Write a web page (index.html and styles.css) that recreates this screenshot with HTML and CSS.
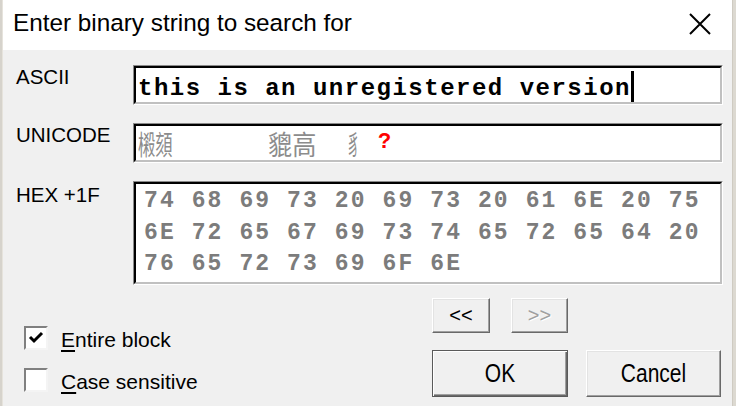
FILE: index.html
```html
<!DOCTYPE html>
<html>
<head>
<meta charset="utf-8">
<link rel="stylesheet" href="styles.css">
</head>
<body>
<div class="win">
  <div class="edge-l"></div>
  <div class="main">
    <div class="titlebar">
      <span class="title">Enter binary string to search for</span>
      <svg class="close" width="22" height="22" viewBox="0 0 22 22"><path d="M1 1 L21 21 M21 1 L1 21" stroke="#000" stroke-width="2" fill="none"/></svg>
    </div>
    <div class="body">
      <div class="fields">
        <div class="lbl">ASCII</div>
        <div class="box"><div class="inner ascii">this is an unregistered version<span class="caret"></span></div></div>
        <div class="lbl">UNICODE</div>
        <div class="box"><div class="inner uni"><span class="ug g1"><span class="gs s1">樧頦</span></span><span class="ug g2"><span class="gs s2">貔高</span></span><span class="ug g3"><span class="gs s3">豸</span></span><span class="q">?</span></div></div>
        <div class="lbl hexl">HEX +1F</div>
        <div class="box hexbox"><div class="inner hex">74 68 69 73 20 69 73 20 61 6E 20 75
6E 72 65 67 69 73 74 65 72 65 64 20
76 65 72 73 69 6F 6E</div></div>
      </div>
      <div class="bottom">
        <div class="opts">
          <div class="chk"><span class="cb"><svg width="16" height="16" viewBox="0 0 16 16"><path d="M2 7 L6 11 L14 3" stroke="#000" stroke-width="3" fill="none"/></svg></span><span class="ct"><u>E</u>ntire block</span></div>
          <div class="chk"><span class="cb"></span><span class="ct"><u>C</u>ase sensitive</span></div>
        </div>
        <div class="btns">
          <div class="brow1">
            <div class="btn sm1">&lt;&lt;</div>
            <div class="btn sm2 dis">&gt;&gt;</div>
          </div>
          <div class="brow2">
            <div class="btn big def"><span class="bl">OK</span></div>
            <div class="btn big big2"><span class="bl">Cancel</span></div>
          </div>
        </div>
      </div>
    </div>
  </div>
  <div class="edge-r"></div>
</div>
</body>
</html>
```
FILE: styles.css
```css
* { box-sizing: border-box; }
html, body { margin: 0; padding: 0; }
body {
  width: 736px;
  height: 406px;
  overflow: hidden;
  font-family: "Liberation Sans", Arial, sans-serif;
  color: #000;
}
.win {
  display: flex;
  width: 736px;
  height: 406px;
}
.edge-l {
  width: 3px;
  background: #d6d3cc;
  border-right: 1px solid #e6e3dc;
}
.edge-r {
  width: 4px;
  background: #dcd9d1;
  border-left: 1px solid #cfcbc2;
}
.main {
  flex: 1;
  display: flex;
  flex-direction: column;
  background: #f0f0f0;
}
.titlebar {
  height: 50px;
  background: #fff;
  display: flex;
  align-items: flex-start;
  padding-left: 10px;
}
.title {
  font-size: 24.3px;
  line-height: 46px;
  flex: 1;
}
.close {
  margin-top: 13px;
  margin-right: 21px;
}
.body {
  padding: 15px 9px 0 13px;
}
.fields {
  display: grid;
  grid-template-columns: 117px 590px;
  grid-template-rows: 40px 40px 104px;
  row-gap: 18px;
}
.lbl {
  font-size: 20.5px;
  line-height: 24px;
}
.hexl { padding-top: 2px; }
.box {
  border: 1px solid;
  border-color: #8a8a8a #ffffff #ffffff #8a8a8a;
}
.inner {
  height: 100%;
  background: #fff;
  border: 2px solid;
  border-color: #000 #c0c0c0 #c0c0c0 #000;
  white-space: pre;
  overflow: hidden;
}
.ascii {
  font-family: "Liberation Mono", "Courier New", monospace;
  font-weight: bold;
  font-size: 24px;
  letter-spacing: 1.5px;
  line-height: 31px;
  padding: 3px 0 0 2px;
}
.caret {
  display: inline-block;
  width: 3px;
  height: 32px;
  background: #000;
  vertical-align: -8px;
  margin-left: 0;
}
.uni {
  display: flex;
  align-items: center;
  padding-left: 2px;
  font-family: "Noto Sans CJK SC", "Noto Sans CJK KR", sans-serif;
  color: #8c8c8c;
  font-size: 23px;
  line-height: 30px;
}
.ug { display: block; height: 30px; }
.g1 { width: 130px; }
.g2 { width: 79px; }
.g3 { width: 31px; }
.gs {
  display: inline-block;
  transform-origin: left center;
}
.s1 { transform: scale(0.75, 1.2); }
.s2 { transform: scale(1.05, 1.2); }
.s3 { transform: scale(0.55, 1.2); }
.q {
  font-family: "Liberation Mono", monospace;
  font-weight: bold;
  color: #ff0000;
  font-size: 22px;
}
.hex {
  font-family: "Liberation Mono", "Courier New", monospace;
  font-weight: bold;
  font-size: 23px;
  letter-spacing: 2.1px;
  line-height: 31.5px;
  color: #7c7c7c;
  padding: 2px 0 0 8px;
}
.bottom {
  display: flex;
  margin-top: 13px;
}
.opts {
  width: 416px;
  padding: 28px 0 0 8px;
  display: flex;
  flex-direction: column;
  gap: 18px;
}
.chk {
  display: flex;
  align-items: center;
  height: 24px;
  gap: 13px;
}
.cb {
  width: 24px;
  height: 24px;
  background: #fff;
  border: 2px solid;
  border-color: #808080 #f4f4f4 #f4f4f4 #808080;
  display: flex;
  align-items: center;
  justify-content: center;
}
.ct {
  font-size: 21px;
  line-height: 24px;
  padding-top: 3px;
}
.ct u { text-underline-offset: 3px; }
.btns {
  display: flex;
  flex-direction: column;
  gap: 17px;
}
.brow1 { display: flex; gap: 21px; }
.brow2 { display: flex; gap: 18px; }
.btn {
  display: flex;
  align-items: center;
  justify-content: center;
  background: #f0f0f0;
  border: 1px solid;
  border-color: #ffffff #696969 #696969 #ffffff;
  box-shadow: inset -1px -1px #a0a0a0, inset 1px 1px #e3e3e3;
  font-size: 20px;
}
.sm1 { width: 58px; height: 35px; }
.sm2 { width: 57px; height: 35px; }
.dis { color: #a0a0a0; text-shadow: 1px 1px #fff; }
.big { width: 136px; height: 47px; font-size: 21px; }
.big2 { width: 135px; }
.def {
  border: 1px solid #5a5a5a;
  box-shadow: inset 1px 1px #ffffff, inset -1px -1px #696969, inset -2px -2px #a0a0a0;
}
.bl {
  display: inline-block;
  transform: scaleY(1.2);
}
```
